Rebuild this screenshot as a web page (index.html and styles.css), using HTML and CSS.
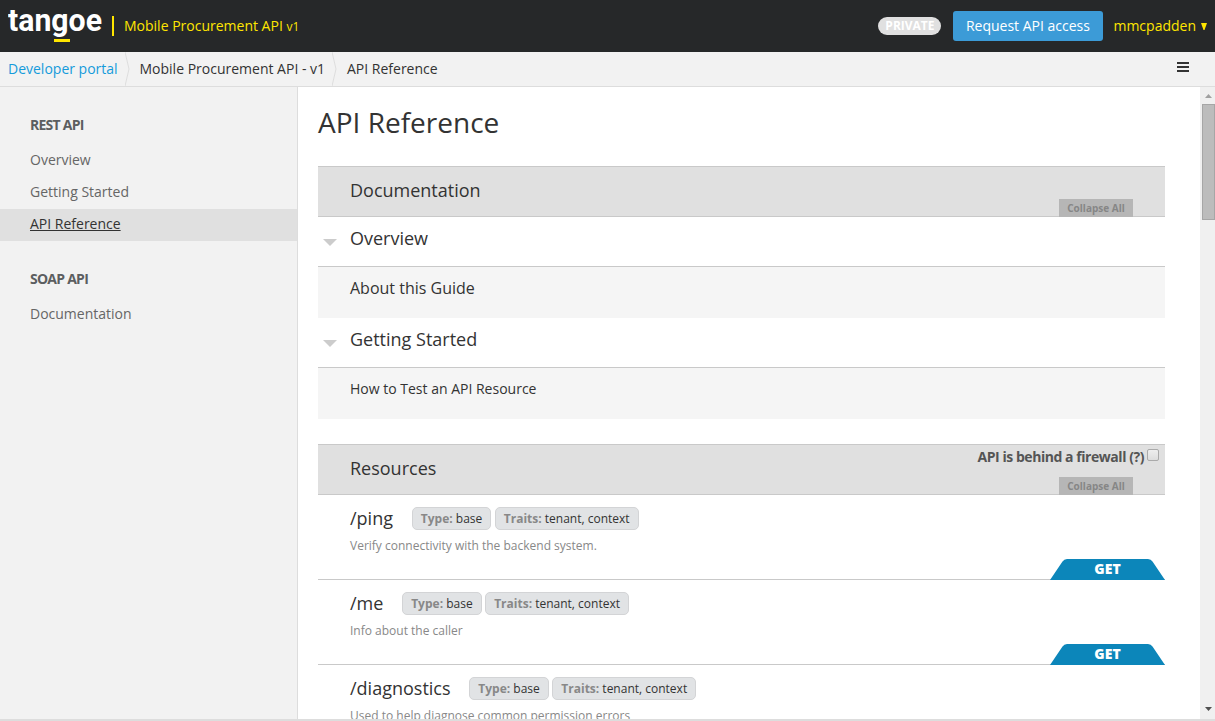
FILE: index.html
```html
<!DOCTYPE html>
<html lang="en">
<head>
<meta charset="utf-8">
<title>API Reference</title>
<link rel="stylesheet" href="styles.css">
</head>
<body>
<div class="app">
  <header class="topbar">
    <svg class="logo" width="96" height="52" viewBox="0 0 96 52">
      <text class="logo-text" x="0" y="31" textLength="94" lengthAdjust="spacingAndGlyphs">tangoe</text>
      <rect x="46" y="39" width="16" height="3" fill="#ffe600"/>
    </svg>
    <span class="divider"></span>
    <span class="product">Mobile Procurement API <small>v1</small></span>
    <div class="actions">
      <span class="private">PRIVATE</span>
      <button class="request">Request API access</button>
      <span class="user">mmcpadden</span>
      <svg class="caret" width="6" height="7" viewBox="0 0 6 7"><path d="M0 0H6L3.500 7H2.500Z" fill="#ffe600"/></svg>
    </div>
  </header>
  <nav class="crumbs">
    <a class="crumb portal">Developer portal</a>
    <svg class="sep" width="7" height="34" viewBox="0 0 7 34"><path d="M0 0L4 17L0 34" fill="none" stroke="#ddd"/></svg>
    <a class="crumb api">Mobile Procurement API - v1</a>
    <svg class="sep" width="7" height="34" viewBox="0 0 7 34"><path d="M0 0L4 17L0 34" fill="none" stroke="#ddd"/></svg>
    <span class="crumb here">API Reference</span>
    <svg class="menu" width="12" height="10" viewBox="0 0 12 10"><path d="M0 0H12V2H0ZM0 4H12V6H0ZM0 8H12V10H0Z" fill="#333"/></svg>
  </nav>
  <div class="body">
    <aside class="sidebar">
      <h3>REST API</h3>
      <a>Overview</a>
      <a>Getting Started</a>
      <a class="active"><span>API Reference</span></a>
      <h3>SOAP API</h3>
      <a>Documentation</a>
    </aside>
    <main class="main">
      <h1>API Reference</h1>
      <section class="docs">
        <div class="bar"><h2>Documentation</h2><span class="collapse">Collapse All</span></div>
        <div class="group"><i class="arrow"></i><h2>Overview</h2></div>
        <div class="panel large">About this Guide</div>
        <div class="group"><i class="arrow"></i><h2>Getting Started</h2></div>
        <div class="panel">How to Test an API Resource</div>
      </section>
      <section>
        <div class="bar">
          <h2>Resources</h2>
          <label class="firewall"><span>API is behind a firewall (?)</span><input class="check" type="checkbox"></label>
          <span class="collapse">Collapse All</span>
        </div>
        <div class="resource">
          <div class="line"><span class="path">/ping</span><span class="tag"><b>Type:</b> base</span><span class="tag"><b>Traits:</b> tenant, context</span></div>
          <p>Verify connectivity with the backend system.</p>
          <span class="get"><svg width="115" height="21" viewBox="0 0 115 21"><path d="M0 21L12.500 2.500Q14 0 17 0H98Q101 0 102.500 2.500L115 21Z" fill="#0c86ba"/></svg><b>GET</b></span>
        </div>
        <div class="resource">
          <div class="line"><span class="path">/me</span><span class="tag"><b>Type:</b> base</span><span class="tag"><b>Traits:</b> tenant, context</span></div>
          <p>Info about the caller</p>
          <span class="get"><svg width="115" height="21" viewBox="0 0 115 21"><path d="M0 21L12.500 2.500Q14 0 17 0H98Q101 0 102.500 2.500L115 21Z" fill="#0c86ba"/></svg><b>GET</b></span>
        </div>
        <div class="resource">
          <div class="line"><span class="path">/diagnostics</span><span class="tag"><b>Type:</b> base</span><span class="tag"><b>Traits:</b> tenant, context</span></div>
          <p>Used to help diagnose common permission errors</p>
        </div>
      </section>
    </main>
    <div class="scrollbar">
      <svg width="7" height="4" viewBox="0 0 7 4"><path d="M0 4L3.500 0L7 4Z" fill="#a0a0a0"/></svg>
      <div class="thumb"></div>
      <svg class="down" width="7" height="4" viewBox="0 0 7 4"><path d="M0 0H7L3.500 4Z" fill="#505050"/></svg>
    </div>
  </div>
</div>
</body>
</html>
```
FILE: styles.css
```css
* { box-sizing: border-box; }
body { margin: 0; font: 14px/20px "Open Sans", sans-serif; color: #333; }
h1, h2, h3, p { margin: 0; font-weight: 400; }
.app { height: 721px; display: flex; flex-direction: column; overflow: hidden; border-bottom: 2px solid #ddd; }
.topbar { height: 52px; flex: none; display: flex; align-items: center; padding: 0 8px; background: #262829; color: #ffe600; white-space: nowrap; }
.logo { flex: none; }
.logo-text { font: 700 31px Roboto, sans-serif; fill: #fff; }
.divider { width: 2px; height: 20px; margin: 0 10px 0 8px; background: #ffe600; }
.product small { font-size: 12px; }
.actions { margin-left: auto; display: flex; align-items: center; }
.private { width: 63px; height: 18px; margin-right: 12px; border-radius: 9px; background: #e0e0e0; color: #fff; font-size: 12px; font-weight: 700; line-height: 17px; text-align: center; }
.request { width: 150px; height: 30px; margin: 0 10px 0 0; padding: 0 1px 0 0; border: 0; border-radius: 3px; background: #3c9bd7; color: #fff; font: 14px/30px "Open Sans", sans-serif; }
.caret { margin-left: 5px; }
.crumbs { height: 35px; flex: none; display: flex; background: #f2f2f2; border-bottom: 1px solid #ddd; line-height: 34px; padding-left: 8px; white-space: nowrap; }
.portal { width: 117px; color: #159bdb; }
.api { width: 200px; padding-left: 7.5px; }
.here { padding-left: 8px; }
.sep { flex: none; }
.menu { margin: 10px 26px 0 auto; }
.body { flex: 1; min-height: 0; display: flex; }
.sidebar { width: 298px; flex: none; background: #f2f2f2; border-right: 1px solid #ddd; color: #666; }
.sidebar h3 { margin-top: 18px; padding-left: 30px; line-height: 40px; font-size: 14px; font-weight: 700; letter-spacing: -.75px; color: #5c5e60; }
.sidebar a { display: block; height: 32px; padding-left: 30px; line-height: 30px; }
.sidebar .active { background: #e0e0e0; color: #333; text-decoration: underline; }
.main { width: 902px; flex: none; padding: 0 35px 0 20px; overflow: hidden; background: #fff; }
.main h1 { height: 79px; padding-top: 15px; font-size: 28px; line-height: 40px; }
.main h2 { font-size: 18px; line-height: 24px; }
.bar { position: relative; height: 51px; padding: 11px 0 0 32px; background: #e0e0e0; border: solid #c9c9c9; border-width: 1px 0; }
.collapse { position: absolute; right: 32px; bottom: -1px; width: 74px; height: 18px; background: #b6b6b6; color: #868686; font-size: 10px; font-weight: 700; line-height: 18px; text-align: center; }
.group { display: flex; height: 50px; padding: 9px 0 0 5px; border-bottom: 1px solid #c9c9c9; }
.arrow { width: 14px; height: 7px; margin: 13px 13px 0 0; background: #ccc; clip-path: polygon(0 0, 100% 0, 50% 100%); }
.panel { height: 51px; padding: 11px 0 0 32px; background: #f5f5f5; }
.panel.large { font-size: 16px; }
.docs { margin-bottom: 25px; }
.firewall { position: absolute; top: 0; right: 6px; display: flex; color: #555; font-size: 14px; font-weight: 700; letter-spacing: -.45px; line-height: 24px; }
.check { appearance: none; width: 12px; height: 12px; margin: 4px 0 0 3px; border: 1px solid #aaa; border-radius: 2px; background: linear-gradient(#eee, #ddd); }
.resource { position: relative; height: 85px; padding: 12px 0 0 32px; border-bottom: 1px solid #c9c9c9; white-space: nowrap; }
.line { display: flex; height: 23px; }
.path { margin-right: 18.8px; font-size: 18px; line-height: 23px; }
.tag { height: 23px; margin-right: 3.5px; padding: 0 8px; border: 1px solid #d3d4d6; border-radius: 5px; background: #e1e3e5; font-size: 12px; line-height: 22px; }
.tag b { color: #888; }
.resource p { padding-top: 6px; color: #888; font-size: 12px; line-height: 20px; }
.get { position: absolute; right: .5px; bottom: -1px; width: 115px; height: 21px; color: #fff; text-align: center; line-height: 20px; }
.get svg { position: absolute; left: 0; top: 0; }
.get b { position: relative; left: .5px; font-size: 14px; font-weight: 800; }
.scrollbar { width: 15px; flex: none; display: flex; flex-direction: column; align-items: center; background: #f0f0f0; padding: 7px 0 8px 2px; }
.thumb { width: 13px; height: 116px; margin-top: 6px; background: #bcbcbc; border: 1px solid #a6a6a6; }
.down { margin-top: auto; }
```
